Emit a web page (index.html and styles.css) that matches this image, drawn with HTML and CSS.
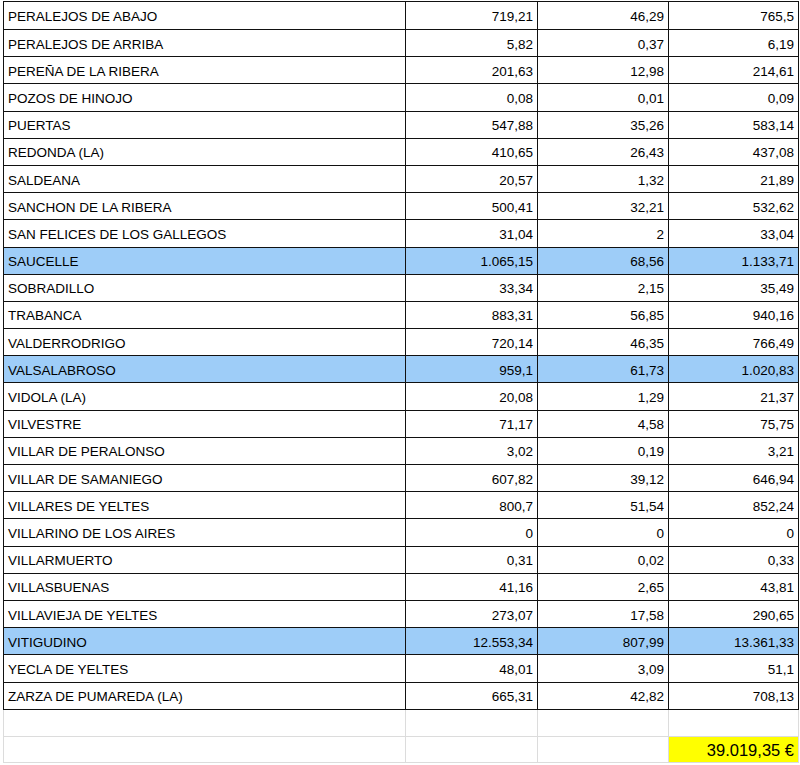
FILE: index.html
```html
<!DOCTYPE html>
<html lang="es">
<head>
<meta charset="utf-8">
<title>Tabla</title>
<link rel="stylesheet" href="styles.css">
</head>
<body>
<table class="sheet">
<colgroup><col class="c-name"><col class="c-num"><col class="c-num2"><col class="c-num3"></colgroup>
<tbody>
<tr class="first"><td>PERALEJOS DE ABAJO</td><td class="n">719,21</td><td class="n">46,29</td><td class="n">765,5</td></tr>
<tr><td>PERALEJOS DE ARRIBA</td><td class="n">5,82</td><td class="n">0,37</td><td class="n">6,19</td></tr>
<tr><td>PEREÑA DE LA RIBERA</td><td class="n">201,63</td><td class="n">12,98</td><td class="n">214,61</td></tr>
<tr><td>POZOS DE HINOJO</td><td class="n">0,08</td><td class="n">0,01</td><td class="n">0,09</td></tr>
<tr><td>PUERTAS</td><td class="n">547,88</td><td class="n">35,26</td><td class="n">583,14</td></tr>
<tr><td>REDONDA (LA)</td><td class="n">410,65</td><td class="n">26,43</td><td class="n">437,08</td></tr>
<tr><td>SALDEANA</td><td class="n">20,57</td><td class="n">1,32</td><td class="n">21,89</td></tr>
<tr><td>SANCHON DE LA RIBERA</td><td class="n">500,41</td><td class="n">32,21</td><td class="n">532,62</td></tr>
<tr><td>SAN FELICES DE LOS GALLEGOS</td><td class="n">31,04</td><td class="n">2</td><td class="n">33,04</td></tr>
<tr class="hl"><td>SAUCELLE</td><td class="n">1.065,15</td><td class="n">68,56</td><td class="n">1.133,71</td></tr>
<tr><td>SOBRADILLO</td><td class="n">33,34</td><td class="n">2,15</td><td class="n">35,49</td></tr>
<tr><td>TRABANCA</td><td class="n">883,31</td><td class="n">56,85</td><td class="n">940,16</td></tr>
<tr><td>VALDERRODRIGO</td><td class="n">720,14</td><td class="n">46,35</td><td class="n">766,49</td></tr>
<tr class="hl"><td>VALSALABROSO</td><td class="n">959,1</td><td class="n">61,73</td><td class="n">1.020,83</td></tr>
<tr><td>VIDOLA (LA)</td><td class="n">20,08</td><td class="n">1,29</td><td class="n">21,37</td></tr>
<tr><td>VILVESTRE</td><td class="n">71,17</td><td class="n">4,58</td><td class="n">75,75</td></tr>
<tr><td>VILLAR DE PERALONSO</td><td class="n">3,02</td><td class="n">0,19</td><td class="n">3,21</td></tr>
<tr><td>VILLAR DE SAMANIEGO</td><td class="n">607,82</td><td class="n">39,12</td><td class="n">646,94</td></tr>
<tr><td>VILLARES DE YELTES</td><td class="n">800,7</td><td class="n">51,54</td><td class="n">852,24</td></tr>
<tr><td>VILLARINO DE LOS AIRES</td><td class="n">0</td><td class="n">0</td><td class="n">0</td></tr>
<tr><td>VILLARMUERTO</td><td class="n">0,31</td><td class="n">0,02</td><td class="n">0,33</td></tr>
<tr><td>VILLASBUENAS</td><td class="n">41,16</td><td class="n">2,65</td><td class="n">43,81</td></tr>
<tr><td>VILLAVIEJA DE YELTES</td><td class="n">273,07</td><td class="n">17,58</td><td class="n">290,65</td></tr>
<tr class="hl"><td>VITIGUDINO</td><td class="n">12.553,34</td><td class="n">807,99</td><td class="n">13.361,33</td></tr>
<tr><td>YECLA DE YELTES</td><td class="n">48,01</td><td class="n">3,09</td><td class="n">51,1</td></tr>
<tr><td>ZARZA DE PUMAREDA (LA)</td><td class="n">665,31</td><td class="n">42,82</td><td class="n">708,13</td></tr>
</tbody>
</table>
<table class="sheet grid">
<colgroup><col class="c-name"><col class="c-num"><col class="c-num2"><col class="c-num3"></colgroup>
<tbody>
<tr class="g1"><td></td><td></td><td></td><td></td></tr>
<tr class="g2"><td></td><td></td><td></td><td class="n total">39.019,35 €</td></tr>
</tbody>
</table>
</body>
</html>
```
FILE: styles.css
```css
html, body {
  margin: 0;
  padding: 0;
  background: #ffffff;
}
body {
  padding-top: 1px;
  font-family: "Liberation Sans", Arial, sans-serif;
  font-size: 13.5px;
  color: #000;
}
.sheet {
  border-collapse: collapse;
  table-layout: fixed;
  width: 795px;
  margin-left: 3px;
}
.c-name { width: 402px; }
.c-num { width: 132px; }
.c-num2 { width: 131px; }
.c-num3 { width: 130px; }
.sheet td {
  border: 1px solid #111;
  height: 27.2px;
  padding: 2px 4px 0 4px;
  box-sizing: border-box;
  white-space: nowrap;
  overflow: hidden;
  vertical-align: middle;
  line-height: 15px;
}
.sheet tr.first td { height: 28px; }
.sheet td.n { text-align: right; }
.sheet tr.hl td { background: #9ecdf8; }
.grid td {
  border: 1px solid #dcdcdc;
  border-top: none;
}
.grid tr.g1 td { height: 27px; }
.grid tr.g2 td { height: 26px; }
.grid td.total {
  background: #ffff00;
  font-size: 16.5px;
  padding-right: 4px;
}
```
